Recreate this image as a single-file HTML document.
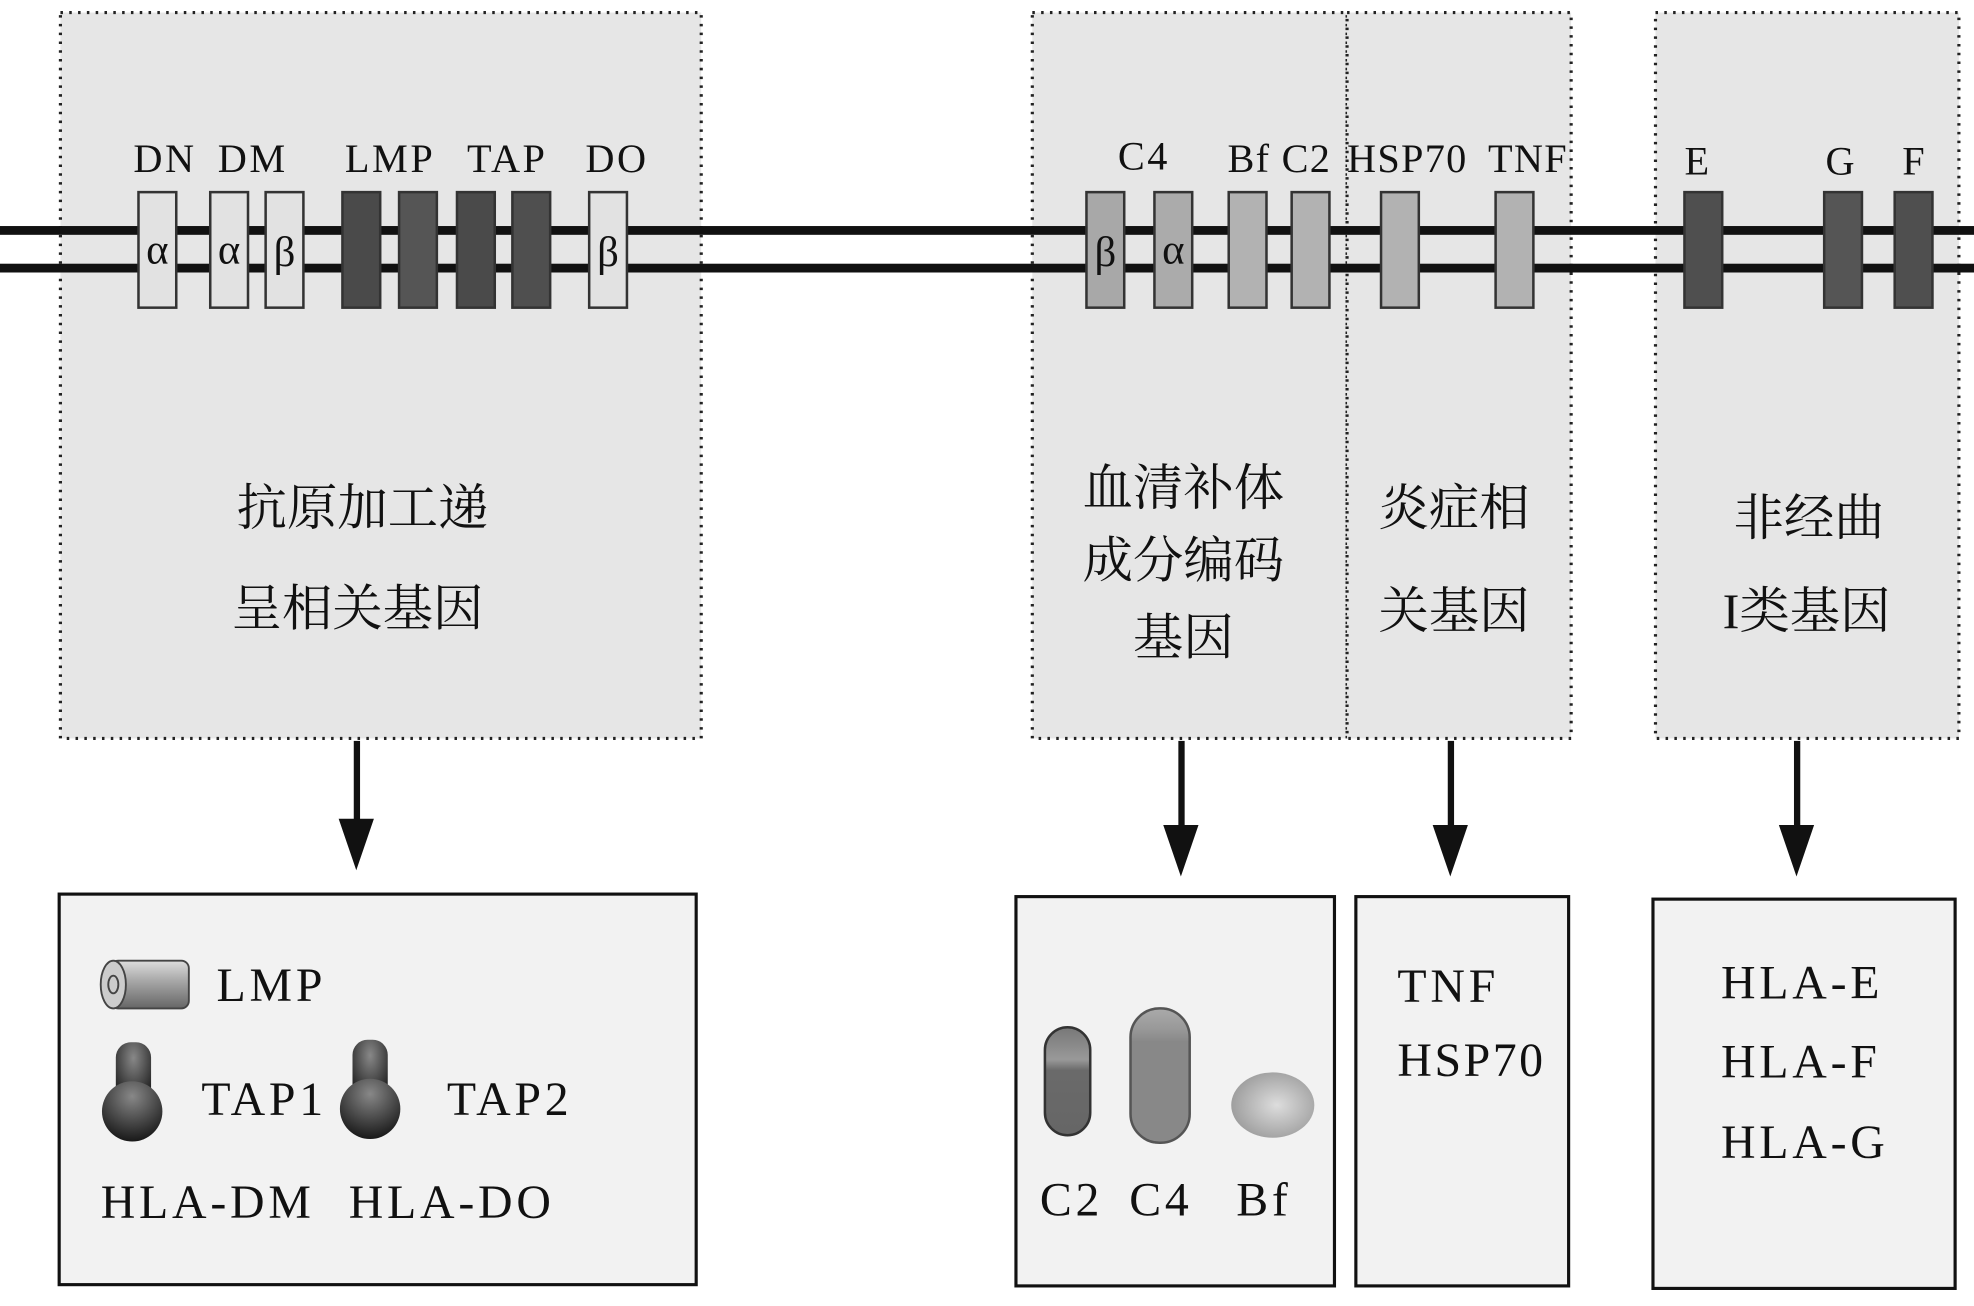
<!DOCTYPE html>
<html><head><meta charset="utf-8"><style>
html,body{margin:0;padding:0;background:#fff;}
svg{display:block;}
text{font-family:"Liberation Serif","Noto Serif CJK SC",serif;fill:#111;}
.cn{font-family:"Liberation Serif","Noto Serif CJK SC","Noto Sans CJK SC",serif;font-size:40px;}
.top{letter-spacing:2px;}
.bot{letter-spacing:3px;}
</style></head><body>
<svg width="1974" height="1306" viewBox="0 0 1568 1040" preserveAspectRatio="none" xmlns="http://www.w3.org/2000/svg">
<defs>
<linearGradient id="cyl" x1="0" y1="0" x2="0" y2="1"><stop offset="0" stop-color="#ddd"/><stop offset="0.4" stop-color="#aaa"/><stop offset="1" stop-color="#666"/></linearGradient>
<radialGradient id="tap" cx="0.5" cy="0.25" r="0.8"><stop offset="0" stop-color="#888"/><stop offset="1" stop-color="#111"/></radialGradient>
<linearGradient id="c2" x1="0" y1="0" x2="0" y2="1"><stop offset="0" stop-color="#777"/><stop offset="0.3" stop-color="#999"/><stop offset="0.4" stop-color="#6a6a6a"/><stop offset="1" stop-color="#666"/></linearGradient>
<linearGradient id="c4" x1="0" y1="0" x2="0" y2="1"><stop offset="0" stop-color="#aaa"/><stop offset="0.15" stop-color="#999"/><stop offset="0.25" stop-color="#888"/><stop offset="1" stop-color="#888"/></linearGradient>
<radialGradient id="bf" cx="0.55" cy="0.5" r="0.6"><stop offset="0" stop-color="#ddd"/><stop offset="1" stop-color="#999"/></radialGradient>
</defs>
<rect width="1568" height="1040" fill="#fff"/>
<g fill="#e6e6e6" stroke="#222" stroke-width="2.5" stroke-dasharray="2 5">
<rect x="48" y="10" width="509" height="578"/>
<rect x="820" y="10" width="250" height="578"/>
<rect x="1070" y="10" width="178" height="578"/>
<rect x="1315" y="10" width="241" height="578"/>
</g>
<rect x="0" y="180" width="1568" height="7" fill="#111"/>
<rect x="0" y="210" width="1568" height="7" fill="#111"/>
<g font-size="32" class="top">
<text x="106" y="137">DN</text><text x="173" y="137">DM</text>
<text x="274" y="137">LMP</text><text x="371" y="137">TAP</text><text x="465" y="137">DO</text>
<text x="888" y="135">C4</text><text x="975" y="137" letter-spacing="1">Bf</text><text x="1018" y="137" letter-spacing="1">C2</text>
<text x="1070" y="137" letter-spacing="1">HSP70</text><text x="1182" y="137" letter-spacing="1">TNF</text>
<text x="1338" y="139">E</text><text x="1450" y="139">G</text><text x="1511" y="139">F</text>
</g>
<g stroke="#333" stroke-width="2">
<rect x="110" y="153" width="30" height="92" fill="#e2e2e2"/>
<rect x="167" y="153" width="30" height="92" fill="#e2e2e2"/>
<rect x="211" y="153" width="30" height="92" fill="#e2e2e2"/>
<rect x="272" y="153" width="30" height="92" fill="#4a4a4a"/>
<rect x="317" y="153" width="30" height="92" fill="#555"/>
<rect x="363" y="153" width="30" height="92" fill="#4a4a4a"/>
<rect x="407" y="153" width="30" height="92" fill="#4f4f4f"/>
<rect x="468" y="153" width="30" height="92" fill="#e2e2e2"/>
<rect x="863" y="153" width="30" height="92" fill="#a8a8a8"/>
<rect x="917" y="153" width="30" height="92" fill="#ababab"/>
<rect x="976" y="153" width="30" height="92" fill="#b2b2b2"/>
<rect x="1026" y="153" width="30" height="92" fill="#b2b2b2"/>
<rect x="1097" y="153" width="30" height="92" fill="#b2b2b2"/>
<rect x="1188" y="153" width="30" height="92" fill="#b2b2b2"/>
<rect x="1338" y="153" width="30" height="92" fill="#4f4f4f"/>
<rect x="1449" y="153" width="30" height="92" fill="#555"/>
<rect x="1505" y="153" width="30" height="92" fill="#4f4f4f"/>
</g>
<g font-size="34" text-anchor="middle">
<text x="125" y="210" fill="#555">α</text><text x="182" y="210" fill="#555">α</text><text x="226" y="212" fill="#555">β</text>
<text x="483" y="212" fill="#555">β</text><text x="878" y="212" fill="#555">β</text><text x="932" y="210" fill="#555">α</text>
</g>
<g class="cn" text-anchor="middle">
<text x="288" y="418">抗原加工递</text><text x="284" y="498">呈相关基因</text>
<text x="940" y="402">血清补体</text><text x="940" y="460">成分编码</text><text x="940" y="521">基因</text>
<text x="1155" y="418">炎症相</text><text x="1155" y="500">关基因</text>
<text x="1437" y="426">非经曲</text><text x="1435" y="500">I类基因</text>
</g>
<g fill="#111">
<rect x="281" y="590" width="5" height="70"/><polygon points="269,652 297,652 283,693"/>
<rect x="936" y="590" width="5" height="70"/><polygon points="924,657 952,657 938,698"/>
<rect x="1150" y="590" width="5" height="70"/><polygon points="1138,657 1166,657 1152,698"/>
<rect x="1425" y="590" width="5" height="70"/><polygon points="1413,657 1441,657 1427,698"/>
</g>
<g fill="#f2f2f2" stroke="#111" stroke-width="2.5">
<rect x="47" y="712" width="506" height="311"/>
<rect x="807" y="714" width="253" height="310"/>
<rect x="1077" y="714" width="169" height="310"/>
<rect x="1313" y="716" width="240" height="310"/>
</g>
<rect x="88" y="765" width="62" height="38" rx="6" fill="url(#cyl)" stroke="#444" stroke-width="1.5"/>
<ellipse cx="90" cy="784" rx="10" ry="19" fill="#ccc" stroke="#444" stroke-width="1.5"/>
<ellipse cx="90" cy="784" rx="4" ry="7" fill="none" stroke="#444" stroke-width="1.5"/>
<g fill="url(#tap)">
<rect x="92" y="830" width="28" height="50" rx="12"/><ellipse cx="105" cy="885" rx="24" ry="24"/>
<rect x="280" y="828" width="28" height="50" rx="12"/><ellipse cx="294" cy="883" rx="24" ry="24"/>
</g>
<rect x="830" y="818" width="36" height="86" rx="18" fill="url(#c2)" stroke="#333" stroke-width="2"/>
<rect x="898" y="803" width="47" height="107" rx="23" fill="url(#c4)" stroke="#555" stroke-width="2"/>
<ellipse cx="1011" cy="880" rx="33" ry="26" fill="url(#bf)"/>
<g font-size="38" class="bot">
<text x="172" y="797">LMP</text>
<text x="160" y="888">TAP1</text><text x="355" y="888">TAP2</text>
<text x="80" y="970">HLA-DM</text><text x="277" y="970">HLA-DO</text>
<text x="826" y="968">C2</text><text x="897" y="968">C4</text><text x="982" y="968">Bf</text>
<text x="1110" y="798">TNF</text><text x="1110" y="857" letter-spacing="2">HSP70</text>
<text x="1367" y="795">HLA-E</text><text x="1367" y="858">HLA-F</text><text x="1367" y="922">HLA-G</text>
</g>
</svg>
</body></html>
